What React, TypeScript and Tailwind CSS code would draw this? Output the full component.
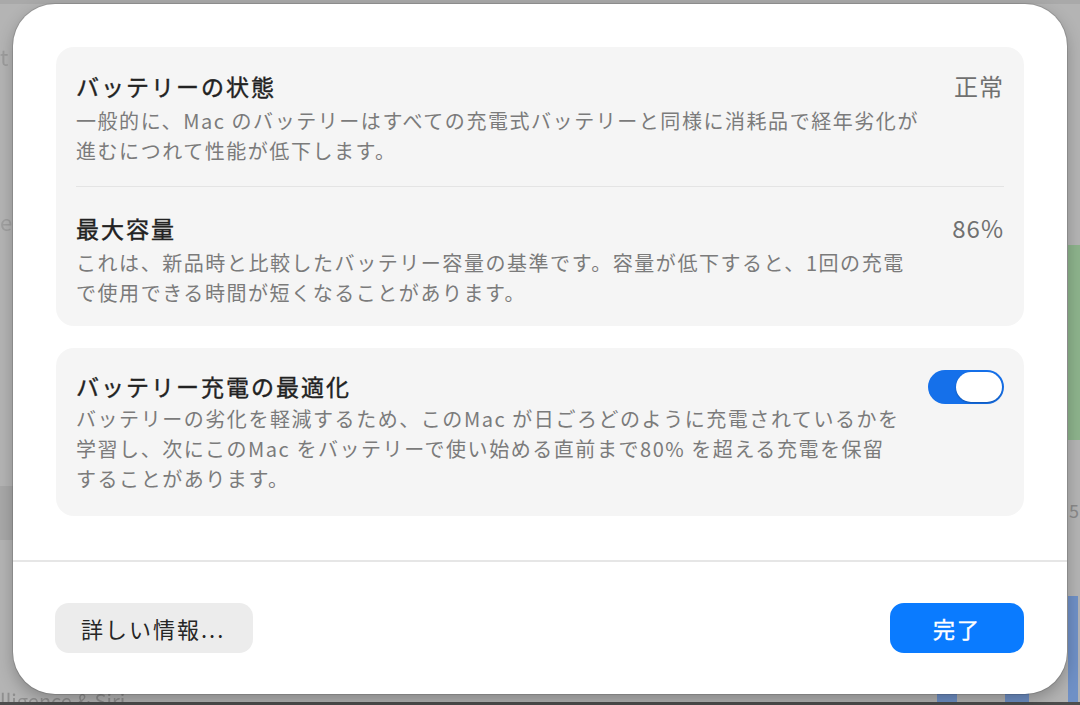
import React from 'react';

type Row = {
  title: string;
  value: string;
  lines: string[];
};

const healthRows: Row[] = [
  {
    title: 'バッテリーの状態',
    value: '正常',
    lines: [
      '一般的に、Mac のバッテリーはすべての充電式バッテリーと同様に消耗品で経年劣化が',
      '進むにつれて性能が低下します。',
    ],
  },
  {
    title: '最大容量',
    value: '86%',
    lines: [
      'これは、新品時と比較したバッテリー容量の基準です。容量が低下すると、1回の充電',
      'で使用できる時間が短くなることがあります。',
    ],
  },
];

const optimizeLines = [
  'バッテリーの劣化を軽減するため、このMac が日ごろどのように充電されているかを',
  '学習し、次にこのMac をバッテリーで使い始める直前まで80% を超える充電を保留',
  'することがあります。',
];

function Description({ lines }: { lines: string[] }) {
  return (
    <div className="text-[20px] leading-[30px] tracking-[1.55px] text-[#7b7b7b]">
      {lines.map((line, i) => (
        <span key={i} className="block whitespace-nowrap">
          {line}
        </span>
      ))}
    </div>
  );
}

function Toggle() {
  return (
    <div className="flex h-[34px] w-[76px] shrink-0 items-center justify-end rounded-full bg-[#1570ea] pr-[2px]">
      <div className="h-[30px] w-[46px] rounded-full bg-white shadow-[0_1px_2px_rgba(0,0,0,0.25)]" />
    </div>
  );
}

export default function App() {
  return (
    <div className="relative h-[705px] w-[1080px] overflow-hidden bg-[#b4b4b4] font-['Noto_Sans_CJK_JP','Noto_Sans',sans-serif]">
      {/* blurred settings window behind the sheet */}
      <div className="absolute left-0 top-0 h-[4px] w-full bg-[#a9a9a9]" />
      <div className="absolute left-0 top-[40px] text-[22px] text-[#9c9c9c] blur-[0.6px]">t</div>
      <div className="absolute left-0 top-[205px] text-[22px] text-[#a0a0a0] blur-[0.6px]">e</div>
      <div className="absolute left-0 top-[486px] h-[54px] w-[13px] bg-[#a8a8a8]" />
      <div className="absolute right-0 top-[245px] h-[195px] w-[12px] bg-[#8db38c]" />
      <div className="absolute right-[1px] top-[497px] text-[18px] text-[#8a8a8a]">5</div>
      <div className="absolute right-[2px] top-[596px] h-[109px] w-[10px] bg-[#6f90c6]" />
      <div className="absolute left-[937px] top-[690px] h-[15px] w-[20px] bg-[#6f90c6]" />
      <div className="absolute left-[1005px] top-[690px] h-[15px] w-[24px] bg-[#6f90c6]" />
      <div className="absolute left-0 top-[690px] text-[20px] leading-[22px] text-[#8f8f8f] blur-[0.5px]">
        lligence &amp; Siri
      </div>
      <div className="absolute bottom-0 left-0 h-[3px] w-full bg-[#4d4d4d]" />

      {/* sheet */}
      <div className="absolute left-[13px] top-[4px] flex h-[690px] w-[1054px] flex-col rounded-[42px] bg-white shadow-[0_0_0_1px_rgba(0,0,0,0.12),0_6px_16px_rgba(0,0,0,0.25)]">
        <div className="flex flex-col gap-[22px] px-[43px] pt-[43px]">
          {/* health card */}
          <div className="flex flex-col rounded-[18px] bg-[#f5f5f5] px-5">
            {healthRows.map((row, i) => (
              <div
                key={row.title}
                className={
                  i === 0
                    ? 'flex flex-col gap-[5px] pb-5 pt-6'
                    : 'flex flex-col gap-[5px] border-t border-[#e4e4e4] pb-[18px] pt-[26px]'
                }
              >
                <div className="flex items-center justify-between">
                  <span className="text-[23px] font-normal leading-[30px] tracking-[2px] text-[#222222] [-webkit-text-stroke:0.4px_#222222]">
                    {row.title}
                  </span>
                  <span className="text-[24px] leading-[30px] tracking-[1px] text-[#707070]">{row.value}</span>
                </div>
                <Description lines={row.lines} />
              </div>
            ))}
          </div>

          {/* optimized charging card */}
          <div className="flex items-start justify-between rounded-[18px] bg-[#f5f5f5] px-5 pb-[22px] pt-[23px]">
            <div className="flex flex-col gap-[3px]">
              <span className="text-[23px] font-normal leading-[30px] tracking-[2px] text-[#222222] [-webkit-text-stroke:0.4px_#222222]">
                バッテリー充電の最適化
              </span>
              <Description lines={optimizeLines} />
            </div>
            <div className="-mt-px">
              <Toggle />
            </div>
          </div>
        </div>

        <div className="mt-[44px] h-[2px] w-full bg-[#e6e6e6]" />

        <div className="flex items-center justify-between pl-[42px] pr-[43px] pt-[41px]">
          <button className="flex h-[50px] w-[198px] items-center rounded-[14px] bg-[#ececec] pl-[26px] text-[22px] tracking-[2px] text-[#262626]">
            詳しい情報...
          </button>
          <button className="flex h-[50px] w-[134px] items-center justify-center rounded-[14px] bg-[#0a7bff] text-[22px] tracking-[2px] text-white [-webkit-text-stroke:0.4px_#ffffff]">
            完了
          </button>
        </div>
      </div>
    </div>
  );
}
